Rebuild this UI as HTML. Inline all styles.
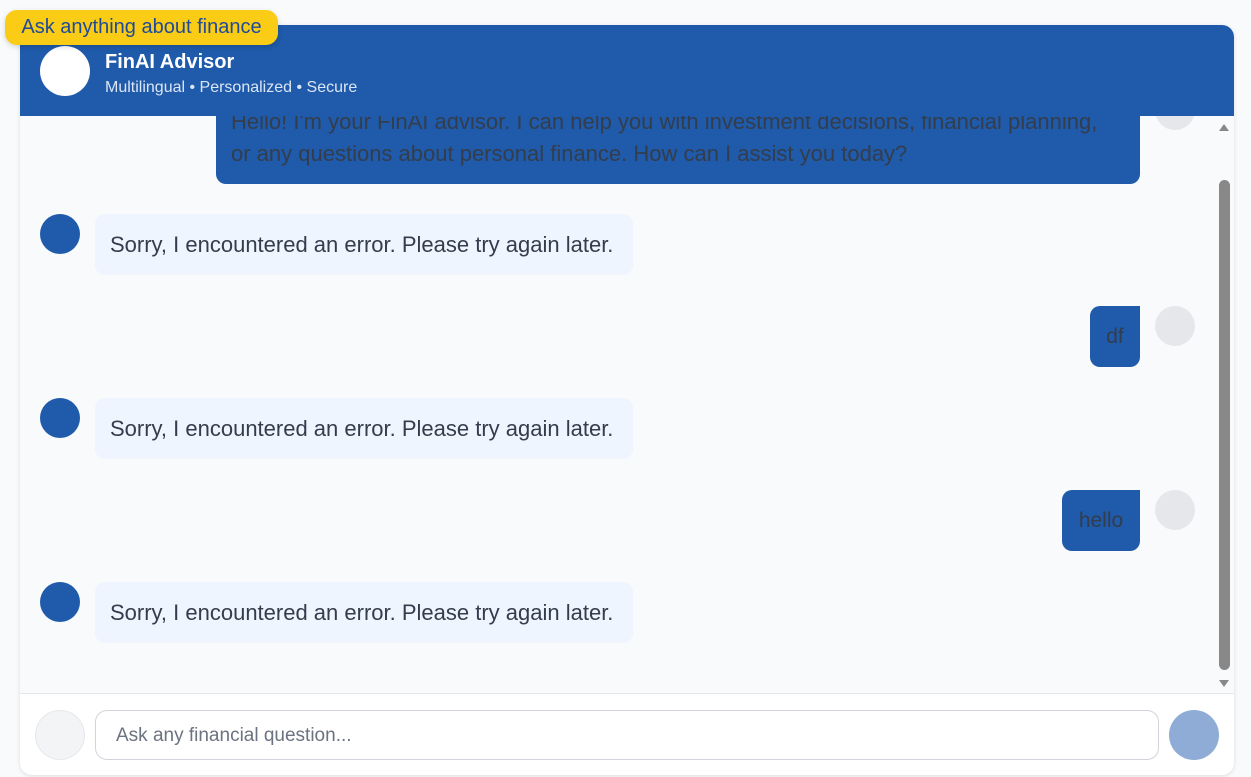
<!DOCTYPE html>
<html><head><meta charset="utf-8"><style>
*{margin:0;padding:0;box-sizing:border-box}
body{width:1251px;height:777px;background:#f8fafc;font-family:"Liberation Sans",sans-serif;position:relative;overflow:hidden}
.a{position:absolute}
.card{left:20px;top:25px;width:1214px;height:750px;border-radius:12px;background:#fff;box-shadow:0 1px 4px rgba(0,0,0,.12);overflow:hidden}
.msgs{left:20px;top:116px;width:1214px;height:578px;background:#f8fafc;border-bottom:1px solid #e3e6ea;overflow:hidden}
.hdr{left:20px;top:25px;width:1214px;height:91px;background:#1f5aab;border-radius:12px 12px 0 0}
.bot{background:#eff5fe;color:#333d4b;font-size:22px;border-radius:10px;padding:0 15px;height:61px;line-height:62px;width:538px;white-space:nowrap}
.av{width:40px;height:40px;border-radius:50%;background:#1f5aab}
.uav{width:40px;height:40px;border-radius:50%;background:#e5e7eb}
.user{background:#1f5aab;color:#333d4b;font-size:21px;border-radius:10px 0 10px 10px;height:61px;line-height:62px;text-align:center}
</style></head><body>
<div class="a card"></div>
<div class="a msgs">
  <div class="a" style="left:196px;top:-20px;width:924px;height:88px;background:#1f5aab;border-radius:0 0 10px 10px"></div>
  <div class="a" style="left:211px;top:-10px;color:#333d4b;font-size:22px;line-height:32px;white-space:nowrap">Hello! I'm your FinAI advisor. I can help you with investment decisions, financial planning,<br>or any questions about personal finance. How can I assist you today?</div>
  <div class="a uav" style="left:1135px;top:-26px"></div>
  <div class="a av" style="left:20px;top:98px"></div>
  <div class="a bot" style="left:75px;top:98px">Sorry, I encountered an error. Please try again later.</div>
  <div class="a user" style="left:1070px;top:190px;width:50px">df</div>
  <div class="a uav" style="left:1135px;top:190px"></div>
  <div class="a av" style="left:20px;top:282px"></div>
  <div class="a bot" style="left:75px;top:282px">Sorry, I encountered an error. Please try again later.</div>
  <div class="a user" style="left:1042px;top:374px;width:78px">hello</div>
  <div class="a uav" style="left:1135px;top:374px"></div>
  <div class="a av" style="left:20px;top:466px"></div>
  <div class="a bot" style="left:75px;top:466px">Sorry, I encountered an error. Please try again later.</div>
  <div class="a" style="left:1198px;top:0;width:16px;height:578px;background:#f8fafc"></div>
  <div class="a" style="left:1199px;top:8px;width:0;height:0;border-left:5px solid transparent;border-right:5px solid transparent;border-bottom:7px solid #888"></div>
  <div class="a" style="left:1199px;top:64px;width:11px;height:490px;border-radius:6px;background:#888"></div>
  <div class="a" style="left:1199px;top:564px;width:0;height:0;border-left:5px solid transparent;border-right:5px solid transparent;border-top:7px solid #888"></div>
</div>
<div class="a hdr"></div>
<div class="a" style="left:40px;top:46px;width:50px;height:50px;border-radius:50%;background:#fff"></div>
<div class="a" style="left:105px;top:51px;color:#fff;font-size:20px;font-weight:bold">FinAI Advisor</div>
<div class="a" style="left:105px;top:79px;color:#dbe6f5;font-size:16px;white-space:nowrap">Multilingual • Personalized • Secure</div>
<div class="a" style="left:5px;top:10px;width:273px;height:35px;border-radius:12px;background:#facc15;color:#1f4a9a;font-size:20px;line-height:35px;text-align:center;white-space:nowrap;box-shadow:0 2px 6px rgba(0,0,0,.15)">Ask anything about finance</div>
<div class="a" style="left:35px;top:710px;width:50px;height:50px;border-radius:50%;background:#f3f4f6;border:1px solid #e5e7eb"></div>
<div class="a" style="left:95px;top:710px;width:1064px;height:50px;border-radius:12px;border:1px solid #d1d5db;background:#fff;color:#6b7280;font-size:19px;line-height:50px;padding-left:20px">Ask any financial question...</div>
<div class="a" style="left:1169px;top:710px;width:50px;height:50px;border-radius:50%;background:#8facd7"></div>
</body></html>
